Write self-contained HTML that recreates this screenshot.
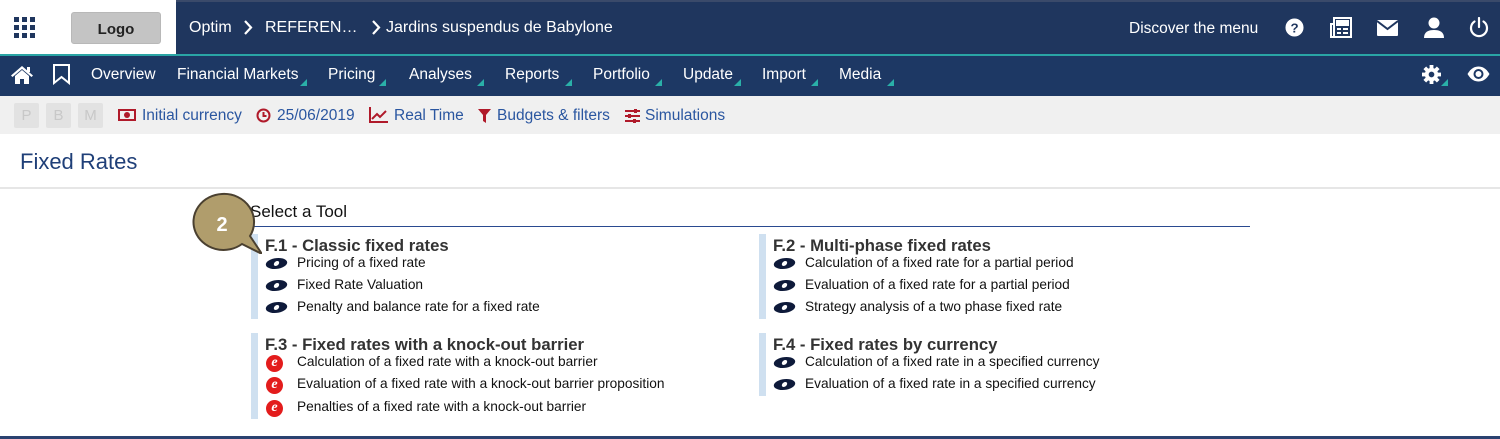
<!DOCTYPE html>
<html><head><meta charset="utf-8"><style>
*{margin:0;padding:0;box-sizing:border-box}
body{width:1500px;height:439px;overflow:hidden;background:#fff;font-family:"Liberation Sans",Arial,sans-serif;position:relative}
.a{position:absolute;white-space:nowrap}
#top{left:0;top:0;width:1500px;height:54px;background:#1f365e;border-top:2px solid #3a4a6a}
#white{left:0;top:0;width:176px;height:54px;background:#fff}
#teal{left:0;top:54px;width:1500px;height:2px;background:#2aa5a5}
#nav{left:0;top:56px;width:1500px;height:40px;background:#1d3864}
#tool{left:0;top:96px;width:1500px;height:38px;background:#f0f0f0}
.w{color:#fff;font-size:16px}
.n{color:#fff;font-size:15.5px;top:66px}
.tri{position:absolute;width:0;height:0;border-left:7px solid transparent;border-bottom:7px solid #2ab0a8}
.t{color:#2a56a0;font-size:15.5px;top:107px}
.pb{top:103px;width:25px;height:25px;background:#e2e2e2;color:#c8c8c8;font-size:15px;text-align:center;line-height:25px;border-radius:2px}
.h{color:#333;font-size:16.7px;font-weight:bold}
.i{color:#111;font-size:13.7px}
.bar{position:absolute;width:7px;background:#cfe0f0}
.e{position:absolute;width:21px;height:11px;border-radius:50%;background:#0e1a3a;transform:skewX(-20deg)}
.e::after{content:"";position:absolute;left:8px;top:3px;width:5px;height:5px;border-radius:50%;background:#fff}
.r{position:absolute;width:17px;height:17px;border-radius:50%;background:#e31c1c;color:#fff;font-size:14px;font-style:italic;font-weight:bold;text-align:center;line-height:16px;font-family:"Liberation Serif",serif}
</style></head><body>
<div class="a" id="top"></div>
<div class="a" id="white"></div>
<div class="a" id="teal"></div>
<div class="a" id="nav"></div>
<div class="a" id="tool"></div>
<svg class="a" style="left:14px;top:17px" width="22" height="22" viewBox="0 0 22 22" fill="#1f365e">
<rect x="0" y="0" width="5" height="5"/><rect x="8" y="0" width="5" height="5"/><rect x="16" y="0" width="5" height="5"/>
<rect x="0" y="8" width="5" height="5"/><rect x="8" y="8" width="5" height="5"/><rect x="16" y="8" width="5" height="5"/>
<rect x="0" y="16" width="5" height="5"/><rect x="8" y="16" width="5" height="5"/><rect x="16" y="16" width="5" height="5"/></svg>
<div class="a" style="left:71px;top:12px;width:90px;height:32px;background:#c4c4c4;border-radius:3px;border:1px solid #b8b8b8;text-align:center;line-height:33px;font-weight:bold;font-size:15px;color:#222">Logo</div>
<div class="a w" style="left:189px;top:19px">Optim</div>
<svg class="a" style="left:243px;top:20px" width="10" height="15" viewBox="0 0 10 15" fill="none" stroke="#fff" stroke-width="2.2"><path d="M2 1l6 6.5L2 14"/></svg>
<div class="a w" style="left:265px;top:19px">REFEREN…</div>
<svg class="a" style="left:371px;top:20px" width="10" height="15" viewBox="0 0 10 15" fill="none" stroke="#fff" stroke-width="2.2"><path d="M2 1l6 6.5L2 14"/></svg>
<div class="a w" style="left:386px;top:19px">Jardins suspendus de Babylone</div>
<div class="a w" style="left:1129px;top:20px;font-size:15.5px">Discover the menu</div>
<svg class="a" style="left:1285px;top:18px" width="19" height="19" viewBox="0 0 20 20"><circle cx="10" cy="10" r="9.5" fill="#fff"/><text x="10" y="15" font-size="14" font-weight="bold" text-anchor="middle" fill="#1f365e" font-family="Liberation Sans">?</text></svg>
<svg class="a" style="left:1330px;top:17px" width="22" height="21" viewBox="0 0 22 21" fill="none" stroke="#fff" stroke-width="2"><rect x="4" y="1" width="17" height="19"/><path d="M4 7H1v13h3"/><rect x="7" y="4" width="11" height="4" fill="#fff"/><path d="M7 12h4M13 12h5M7 16h4M13 16h5"/></svg>
<svg class="a" style="left:1377px;top:20px" width="21" height="16" viewBox="0 0 21 16"><rect width="21" height="16" rx="1" fill="#fff"/><path d="M0 1l10.5 8L21 1" stroke="#1f365e" stroke-width="2" fill="none"/></svg>
<svg class="a" style="left:1424px;top:17px" width="20" height="21" viewBox="0 0 20 21" fill="#fff"><circle cx="10" cy="6" r="5.5"/><path d="M0 21c0-6 4-8 10-8s10 2 10 8z"/></svg>
<svg class="a" style="left:1469px;top:17px" width="20" height="21" viewBox="0 0 20 21" fill="none" stroke="#fff" stroke-width="2.2" stroke-linecap="round"><path d="M10 1v9"/><path d="M5.5 4.5a8 8 0 1 0 9 0"/></svg>
<svg class="a" style="left:11px;top:65px" width="22" height="19" viewBox="0 0 22 19" fill="#fff"><path d="M11 1L0 10.5l1.5 1.5L11 4l9.5 8 1.5-1.5z"/><path d="M4 11l7-6 7 6v8h-5v-5h-4v5H4z"/><rect x="16" y="2" width="3" height="5"/></svg>
<svg class="a" style="left:53px;top:64px" width="17" height="21" viewBox="0 0 17 21" fill="none" stroke="#fff" stroke-width="2"><path d="M1 1h15v18l-7.5-6L1 19z"/></svg>
<div class="a n" style="left:91px">Overview</div>
<div class="a n" style="left:177px">Financial Markets</div><div class="tri" style="left:300px;top:79px"></div>
<div class="a n" style="left:328px">Pricing</div><div class="tri" style="left:379px;top:79px"></div>
<div class="a n" style="left:409px">Analyses</div><div class="tri" style="left:477px;top:79px"></div>
<div class="a n" style="left:505px">Reports</div><div class="tri" style="left:565px;top:79px"></div>
<div class="a n" style="left:593px">Portfolio</div><div class="tri" style="left:655px;top:79px"></div>
<div class="a n" style="left:683px">Update</div><div class="tri" style="left:734px;top:79px"></div>
<div class="a n" style="left:762px">Import</div><div class="tri" style="left:811px;top:79px"></div>
<div class="a n" style="left:839px">Media</div><div class="tri" style="left:887px;top:79px"></div>
<svg class="a" style="left:1422px;top:65px" width="19" height="19" viewBox="0 0 20 20"><g fill="#fff"><circle cx="10" cy="10" r="7"/><rect x="8" y="0" width="4" height="20"/><rect x="8" y="0" width="4" height="20" transform="rotate(45 10 10)"/><rect x="8" y="0" width="4" height="20" transform="rotate(90 10 10)"/><rect x="8" y="0" width="4" height="20" transform="rotate(135 10 10)"/></g><circle cx="10" cy="10" r="3" fill="#1d3864"/></svg>
<div class="tri" style="left:1441px;top:79px"></div>
<svg class="a" style="left:1467px;top:66px" width="23" height="16" viewBox="0 0 23 16"><path d="M0.5 8C4 2 8 0.5 11.5 0.5S19 2 22.5 8C19 14 15 15.5 11.5 15.5S4 14 0.5 8z" fill="#fff"/><circle cx="11.5" cy="8" r="5" fill="#1d3864"/><circle cx="11.5" cy="8" r="3" fill="#fff"/></svg>
<div class="a pb" style="left:14px">P</div>
<div class="a pb" style="left:46px">B</div>
<div class="a pb" style="left:78px">M</div>
<svg class="a" style="left:118px;top:109px" width="18" height="12" viewBox="0 0 18 12"><rect x="1" y="1" width="16" height="10" fill="none" stroke="#b01a2a" stroke-width="2"/><circle cx="9" cy="6" r="3" fill="#b01a2a"/></svg>
<div class="a t" style="left:142px">Initial currency</div>
<svg class="a" style="left:256px;top:108px" width="15" height="15" viewBox="0 0 15 15" fill="none" stroke="#b01a2a" stroke-width="2"><circle cx="7.5" cy="7.5" r="6"/><path d="M7.5 4v4h3"/></svg>
<div class="a t" style="left:277px">25/06/2019</div>
<svg class="a" style="left:369px;top:107px" width="19" height="16" viewBox="0 0 19 16" fill="none" stroke="#b01a2a" stroke-width="2"><path d="M1 0v15h18"/><path d="M3 12l5-5 3 3 6-6"/></svg>
<div class="a t" style="left:394px">Real Time</div>
<svg class="a" style="left:478px;top:109px" width="13" height="14" viewBox="0 0 13 14" fill="#b01a2a"><path d="M0 0h13L8 6v8L5 12V6z"/></svg>
<div class="a t" style="left:497px">Budgets &amp; filters</div>
<svg class="a" style="left:625px;top:109px" width="15" height="14" viewBox="0 0 15 14" fill="#b01a2a"><rect y="1" width="15" height="2"/><rect y="6" width="15" height="2"/><rect y="11" width="15" height="2"/><rect x="9" y="0" width="3" height="4"/><rect x="3" y="5" width="3" height="4"/><rect x="8" y="10" width="3" height="4"/></svg>
<div class="a t" style="left:645px">Simulations</div>
<div class="a" style="left:20px;top:149px;font-size:22px;color:#1f3f78">Fixed Rates</div>
<div class="a" style="left:0;top:187px;width:1500px;height:2px;background:#e6e6e6"></div>
<div class="a" style="left:0;top:436px;width:1500px;height:3px;background:#2a4270"></div>
<div class="a" style="left:250px;top:202px;font-size:17px;color:#111">Select a Tool</div>
<div class="a" style="left:250px;top:226px;width:1000px;height:1px;background:#2a4a90"></div>
<div class="bar" style="left:251px;top:234px;height:85px"></div>
<div class="bar" style="left:251px;top:333px;height:86px"></div>
<div class="bar" style="left:759px;top:234px;height:85px"></div>
<div class="bar" style="left:759px;top:333px;height:63px"></div>
<div class="a h" style="left:265px;top:236px">F.1 - Classic fixed rates</div>
<div class="e" style="left:266px;top:258px"></div><div class="a i" style="left:297px;top:255px">Pricing of a fixed rate</div>
<div class="e" style="left:266px;top:280px"></div><div class="a i" style="left:297px;top:277px">Fixed Rate Valuation</div>
<div class="e" style="left:266px;top:302px"></div><div class="a i" style="left:297px;top:299px">Penalty and balance rate for a fixed rate</div>
<div class="a h" style="left:265px;top:335px">F.3 - Fixed rates with a knock-out barrier</div>
<div class="r" style="left:266px;top:355px">e</div><div class="a i" style="left:297px;top:354px">Calculation of a fixed rate with a knock-out barrier</div>
<div class="r" style="left:266px;top:377px">e</div><div class="a i" style="left:297px;top:376px">Evaluation of a fixed rate with a knock-out barrier proposition</div>
<div class="r" style="left:266px;top:400px">e</div><div class="a i" style="left:297px;top:399px">Penalties of a fixed rate with a knock-out barrier</div>
<div class="a h" style="left:773px;top:236px">F.2 - Multi-phase fixed rates</div>
<div class="e" style="left:774px;top:258px"></div><div class="a i" style="left:805px;top:255px">Calculation of a fixed rate for a partial period</div>
<div class="e" style="left:774px;top:280px"></div><div class="a i" style="left:805px;top:277px">Evaluation of a fixed rate for a partial period</div>
<div class="e" style="left:774px;top:302px"></div><div class="a i" style="left:805px;top:299px">Strategy analysis of a two phase fixed rate</div>
<div class="a h" style="left:773px;top:335px">F.4 - Fixed rates by currency</div>
<div class="e" style="left:774px;top:357px"></div><div class="a i" style="left:805px;top:354px">Calculation of a fixed rate in a specified currency</div>
<div class="e" style="left:774px;top:379px"></div><div class="a i" style="left:805px;top:376px">Evaluation of a fixed rate in a specified currency</div>
<svg class="a" style="left:190px;top:192px" width="72" height="62" viewBox="0 0 72 62"><path d="M32 2a30 28 0 1 0 20 50l20 10-12-18A30 28 0 0 0 32 2z" fill="#b09d6c" stroke="#4a4030" stroke-width="2"/><text x="32" y="39" font-size="20" font-weight="bold" fill="#fff" text-anchor="middle" font-family="Liberation Sans">2</text></svg>
</body></html>
